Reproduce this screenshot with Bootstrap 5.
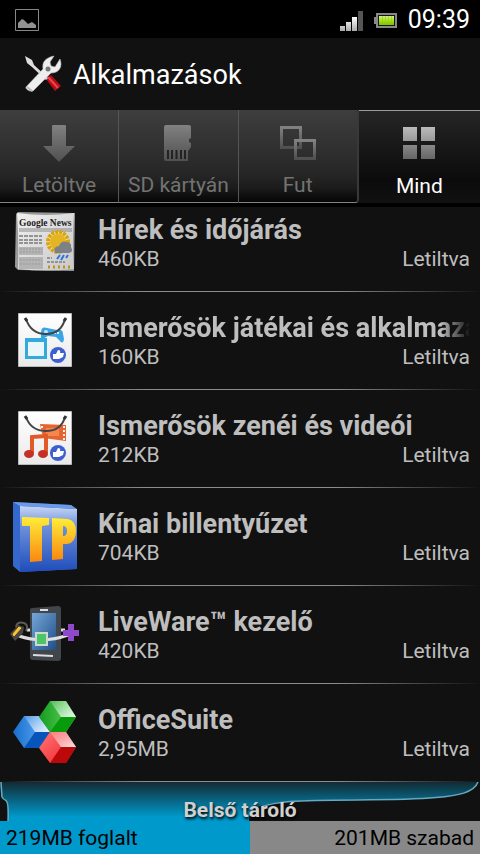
<!DOCTYPE html>
<html lang="hu">
<head>
<meta charset="utf-8">
<meta name="viewport" content="width=device-width, initial-scale=1">
<title>Alkalmazások</title>
<link href="https://cdn.jsdelivr.net/npm/bootstrap@5.3.0/dist/css/bootstrap.min.css" rel="stylesheet">
<style>
  body { background: #111; color: #bebebe; font-family: Roboto, "Noto Sans", sans-serif; font-size: 21px; line-height: 26px; }
  svg { display: block; flex: none; }
  .status-bar { background: #000; height: 38px; color: #fff; font-size: 25px; padding: 2px 10px 0 15px; gap: 10px; }
  .title-bar { height: 72px; }
  .title-bar h1 { font-size: 27px; line-height: 32px; padding: 2px 0 0 1px; }
  .app-tabs { z-index: 2; background: #111; border-bottom: 4px solid #000; }
  .app-tabs button { flex: 1 1 0; height: 93px; color: #737373; border: 0; border-bottom: 1px solid #858585; padding: 8px 0 0; background: linear-gradient(#3e3e3e, #262626 70%, #1b1b1b 85%, #050505); white-space: nowrap; line-height: 26px; }
  .app-tabs button + button { border-left: 1px solid #555; }
  .app-tabs .before-active { border-right: 2px solid #383838; border-radius: 0 0 4px 0; }
  .app-tabs button.current { flex-basis: 3px; color: #fff; border: 0; border-top: 1px solid #9a9a9a; background: linear-gradient(#252525, #0b0b0b 75%, #111); }
  .app-tabs svg { margin: 0 auto 10px; }
  .app-list { margin-top: -13px; }
  .app-list li { padding: 20px 10px 19px 10px; border-bottom: 1px solid; border-image: linear-gradient(90deg, #111, #8c8c8c 30%, #8c8c8c 70%, #111) 1; }
  .app-icon { width: 70px; height: 76px; margin: -10px 18px -10px 0; }
  .app-name { font-size: 27px; line-height: 32px; white-space: nowrap; overflow: hidden; }
  .fade-end { -webkit-mask-image: linear-gradient(90deg, #000 92%, transparent); mask-image: linear-gradient(90deg, #000 92%, transparent); }
  .storage { height: 39px; }
  .storage-curve { width: 100%; height: 39px; }
  .storage-label { color: #d0d0d0; font-size: 21px; top: 15px; text-shadow: 1px 2px 3px #000; }
  .usage { height: 33px; background: #888; color: #000; border-radius: 0; font-size: 21px; }
  .usage-fill { background: #09c; color: #000; padding-left: 6px; }
  .usage-free { padding-right: 6px; }
</style>
<script src="https://cdn.jsdelivr.net/npm/bootstrap@5.3.0/dist/js/bootstrap.bundle.min.js"></script>
</head>
<body>
<div class="status-bar d-flex align-items-center">
  <svg width="24" height="22" viewBox="0 0 24 22" class="me-auto"><path d="M.5.5h23v21H.5z" fill="none" stroke="#888"/><path d="M3 19v-5l4-4 2 1 4 4 4-2 4 3v3z" fill="#929292"/></svg>
  <svg width="24" height="21" viewBox="0 0 24 21"><defs><linearGradient id="sg" x2="0" y2="1"><stop stop-color="#fff"/><stop offset="1" stop-color="#aaa"/></linearGradient></defs><path d="M0 16h5v5H0zM6 12h5v9H6zM12 7h5v14h-5z" fill="url(#sg)"/><path d="M18 1h5v20h-5z" fill="#555"/></svg>
  <svg width="24" height="17" viewBox="0 0 24 17"><defs><linearGradient id="bg" x2="0" y2="1"><stop stop-color="#d7f08c"/><stop offset=".6" stop-color="#9bdc0c"/><stop offset="1" stop-color="#7ebd00"/></linearGradient></defs><path d="M0 5h2V1h21v15H2v-4H0z" fill="#888"/><path d="M4 3h17v11H4z" fill="#151515"/><path d="M5 4h15v9H5z" fill="url(#bg)"/><path d="M8.500 4v9M11.500 4v9M14.500 4v9M17.500 4v9" stroke="#8ccc10" stroke-width=".6"/></svg>
  <span>09:39</span>
</div>
<header class="title-bar d-flex align-items-center ps-4">
  <svg width="40" height="38" viewBox="0 0 40 38"><path d="M22 24l5-4 10 11-6 5z" fill="#b70d17"/><path d="M24 22l10 11" stroke="#ef4350" stroke-width="2"/><path d="M1 1l7 4 2 5 14 13-2 2L8 12 3 8z" fill="#ddd"/><path d="M2 32l17-18c-1-7 2-11 11-13l-4 6 1 4 4 1 5-8c3 8-1 14-9 14L9 36c-3 1-8-2-7-4z" fill="#eee" stroke="#bbb" stroke-width=".6"/><circle cx="24" cy="14" r="2.500" fill="#777"/><path d="M3 32l5 4" stroke="#bbb" stroke-width="2"/></svg>
  <h1 class="mb-0 ms-2 fw-normal text-white">Alkalmazások</h1>
</header>
<nav class="app-tabs d-flex position-relative" role="tablist">
  <button type="button" role="tab" aria-selected="false"><svg width="34" height="40" viewBox="0 0 34 40"><defs><linearGradient id="tg" x2="0" y2="1"><stop stop-color="#818181"/><stop offset="1" stop-color="#505050"/></linearGradient></defs><path d="M10 4q0-1 1-1h12q1 0 1 1v20h9L17 40 1 24h9z" fill="url(#tg)"/></svg>Letöltve</button>
  <button type="button" role="tab" aria-selected="false"><svg width="30" height="40" viewBox="0 0 30 40"><path d="M3 3h23q2 0 2 2v11l-2 1v3l2 1v4l-3 4v10H3q-2 0-2-2V5q0-2 2-2z" fill="url(#tg)"/><path d="M5 28v9M9 28v9M13.500 28v9M18 28v9M22 28v9" stroke="#222" stroke-width="2"/></svg>SD kártyán</button>
  <button type="button" role="tab" aria-selected="false" class="before-active"><svg width="38" height="40" viewBox="0 0 38 40"><g fill="none" stroke="url(#tg)" stroke-width="3"><path d="M2.500 5.500h19v20h-19z"/><path d="M16.500 18.500h19v18h-19z"/></g></svg>Fut</button>
  <button type="button" role="tab" aria-selected="true" class="current"><svg width="34" height="40" viewBox="0 0 34 40"><defs><linearGradient id="mg" x2="0" y2="1"><stop stop-color="#bbb"/><stop offset="1" stop-color="#999"/></linearGradient><linearGradient id="mh" x2="0" y2="1"><stop stop-color="#888"/><stop offset="1" stop-color="#666"/></linearGradient></defs><path d="M1 4h14v14H1zM19 4h14v14H19z" fill="url(#mg)"/><path d="M1 22h14v14H1zM19 22h14v14H19z" fill="url(#mh)"/></svg>Mind</button>
</nav>
<ul class="app-list list-unstyled mb-0">
  <li class="d-flex align-items-start">
    <svg class="app-icon" viewBox="0 0 70 76"><defs><linearGradient id="ng" x2="1" y2="1"><stop stop-color="#f0f0f0"/><stop offset="1" stop-color="#c8c8c8"/></linearGradient></defs><path d="M8 8l57 1-1 58-56-1-3-3 1-53z" fill="#999"/><path d="M7 9q29 4 57 0 -2 29 0 56-28 3-56 0 1-28-1-56z" fill="url(#ng)"/><text x="9" y="22" font-family="Liberation Serif, serif" font-weight="700" font-size="9.500" fill="#222">Google News</text><path d="M9 25h53M9 27h53" stroke="#888"/><path d="M9 32h23M9 36h23M9 39h23" stroke="#444" stroke-dasharray="4 1"/><path d="M9 43h24v8H9zM9 53h24v12H9z" fill="#b4b4b4"/><path d="M10 45h22M10 48h22M10 56h22M10 60h22" stroke="#999" stroke-dasharray="2 1"/><circle cx="48" cy="38" r="10" fill="#f6e39d" stroke="#d9a40e" stroke-width="4" stroke-dasharray="3 1"/><circle cx="48" cy="38" r="8" fill="#e5b423"/><path d="M45 49q-3-6 4-7 2-6 8-4 5 1 4 5 3 5-2 6z" fill="#7c8187"/><path d="M50 51l-3 4M54 51l-3 5M58 51l-2 3" stroke="#2d70df" stroke-width="2"/><path d="M37 54h5M37 58h18" stroke="#555" stroke-dasharray="3 1"/><path d="M38 63h22" stroke="#b99324" stroke-width="3" stroke-dasharray="2 3"/></svg>
    <div class="flex-grow-1 overflow-hidden"><div class="app-name fw-bold">Hírek és időjárás</div><div class="d-flex justify-content-between"><span>460KB</span><span>Letiltva</span></div></div>
  </li>
  <li class="d-flex align-items-start">
    <svg class="app-icon" viewBox="0 0 70 76"><defs><linearGradient id="wg" x2="0" y2="1"><stop stop-color="#fff"/><stop offset="1" stop-color="#eaeaea"/></linearGradient></defs><path d="M8.500 11.500h53v53h-53z" fill="url(#wg)" stroke="#bbb"/><path d="M31 31q0-7 6-5l10 2q6-1 6 4l1 5q-1 6-4 2l-4-4-8-1-7 4z" fill="#38a5e7"/><circle cx="36" cy="30" r="2" fill="#bfeaff"/><path d="M44 31h5" stroke="#d4f1ff" stroke-width="2" stroke-dasharray="2 1"/><path d="M16.500 37.500h19v18h-19z" fill="#e9f7fd" stroke="#33aade" stroke-width="3"/><path d="M15 36h22v4H15z" fill="#33aade"/><path d="M16 17q5 15 20 15T55 17" fill="none" stroke="#444" stroke-width="2"/><path d="M15 16l2 3M56 16l-2 3" stroke="#333" stroke-width="3"/><circle cx="48" cy="53" r="8" fill="#3e60cf"/><path d="M43 52h3l2-4q3 0 2 3h4l-1 4-4 2h-6z" fill="#fff"/><path d="M49 61q5-1 7-7-1 6-7 7z" fill="#eee"/></svg>
    <div class="flex-grow-1 overflow-hidden"><div class="app-name fw-bold fade-end">Ismerősök játékai és alkalmazásai</div><div class="d-flex justify-content-between"><span>160KB</span><span>Letiltva</span></div></div>
  </li>
  <li class="d-flex align-items-start">
    <svg class="app-icon" viewBox="0 0 70 76"><path d="M8.500 11.500h53v53h-53z" fill="url(#wg)" stroke="#bbb"/><path d="M30 24l26 1v16l-23-3z" fill="#e66332"/><path d="M32 26v11M54 26v14" stroke="#fff2e8" stroke-width="2" stroke-dasharray="2 2"/><path d="M36 28h13v8H36z" fill="#f4874c"/><path d="M22 53V37l14-1v17" fill="none" stroke="#e35a29" stroke-width="4"/><ellipse cx="19" cy="54" rx="5" ry="4" fill="#c33028"/><ellipse cx="33" cy="54" rx="5" ry="4" fill="#c33028"/><path d="M16 17q5 14 20 14T55 17" fill="none" stroke="#444" stroke-width="2"/><path d="M15 16l2 3M56 16l-2 3" stroke="#333" stroke-width="3"/><circle cx="48" cy="53" r="8" fill="#3e60cf"/><path d="M43 52h3l2-4q3 0 2 3h4l-1 4-4 2h-6z" fill="#fff"/><path d="M49 61q5-1 7-7-1 6-7 7z" fill="#eee"/></svg>
    <div class="flex-grow-1 overflow-hidden"><div class="app-name fw-bold">Ismerősök zenéi és videói</div><div class="d-flex justify-content-between"><span>212KB</span><span>Letiltva</span></div></div>
  </li>
  <li class="d-flex align-items-start">
    <svg class="app-icon" viewBox="0 0 70 76"><defs><linearGradient id="pg" x2="0" y2="1"><stop stop-color="#c8d7f5"/><stop offset=".3" stop-color="#6f91da"/><stop offset="1" stop-color="#1f4cba"/></linearGradient><linearGradient id="yg" x2="0" y2="1"><stop stop-color="#ffed38"/><stop offset="1" stop-color="#fa8810"/></linearGradient></defs><path d="M3 4l58 3 6 5v59l-57 3-7-6z" fill="#3568cc"/><path d="M10 8l57 3v60l-57 3z" fill="url(#pg)"/><path d="M3 4l58 3 6 4-57-3z" fill="#6a9ae8"/><g fill="url(#yg)"><path d="M12 19l27 1v7l-7 1v35l-12 1V28h-8z"/><path fill-rule="evenodd" d="M42 20l16 1q8 2 8 12 0 12-9 13h-4v15l-11 1zM53 28v10q4 0 4-5t-4-5z"/></g></svg>
    <div class="flex-grow-1 overflow-hidden"><div class="app-name fw-bold">Kínai billentyűzet</div><div class="d-flex justify-content-between"><span>704KB</span><span>Letiltva</span></div></div>
  </li>
  <li class="d-flex align-items-start">
    <svg class="app-icon" viewBox="0 0 70 76"><defs><linearGradient id="lg" x2="1" y2="1"><stop stop-color="#75a7d8"/><stop offset="1" stop-color="#204e86"/></linearGradient></defs><path d="M20 14q0-2 2-2l26-2q3 0 3 3v49q0 3-3 3l-25-1q-3 0-3-3z" fill="#41464d"/><path d="M22 17h24v37H22z" fill="url(#lg)"/><path d="M30 14h8M23 59l20 1" stroke="#ddd" stroke-width="2"/><path d="M9 40q24 8 49-1M17 34h3M51 34h4" fill="none" stroke="#dedede" stroke-width="3"/><path d="M25 36h13v14H25z" fill="#ccd9cc"/><path d="M27 38h9v10h-9z" fill="#4bc568"/><path d="M6 31q1-6 8-4 5 2 2 8" fill="none" stroke="#5d5b58" stroke-width="2"/><path d="M0 38l8-9 6 2-1 6-8 8z" fill="#494743"/><path d="M3 38l6-7 2 1-7 8z" fill="#ffc52a" stroke="#ffc52a"/><path d="M58 28h6v6h5v6h-5v5h-6v-5h-5v-6h5z" fill="#8d49ca"/></svg>
    <div class="flex-grow-1 overflow-hidden"><div class="app-name fw-bold">LiveWare™ kezelő</div><div class="d-flex justify-content-between"><span>420KB</span><span>Letiltva</span></div></div>
  </li>
  <li class="d-flex align-items-start">
    <svg class="app-icon" viewBox="0 -3 70 76"><defs><linearGradient id="b1"><stop stop-color="#176ecb"/><stop offset="1" stop-color="#69b4ff"/></linearGradient><linearGradient id="g1"><stop stop-color="#159b1c"/><stop offset="1" stop-color="#64d966"/></linearGradient><linearGradient id="r1" x2="1" y2="1"><stop stop-color="#ff7777"/><stop offset="1" stop-color="#ee2027"/></linearGradient><linearGradient id="w1" x2="1" y2="1"><stop stop-color="#fff" stop-opacity=".15"/><stop offset="1" stop-color="#fff" stop-opacity=".85"/></linearGradient></defs><path d="M3 35l11-16h15l11 16-11 16H14z" fill="url(#b1)"/><path d="M14 19h15l11 16H25z" fill="url(#w1)"/><path d="M25 35h15L29 51H14z" fill="#0754bb"/><path d="M29 20L40 4h16l10 16-10 15H40z" fill="url(#g1)"/><path d="M40 4h16l10 16H51z" fill="url(#w1)"/><path d="M51 20h15L56 35H40z" fill="#079b0b"/><path d="M29 51l11-16h16l10 15-10 16H40z" fill="url(#r1)"/><path d="M40 35h16l10 15H51z" fill="url(#w1)"/><path d="M51 50h15L56 66H40z" fill="#bd0809"/></svg>
    <div class="flex-grow-1 overflow-hidden"><div class="app-name fw-bold">OfficeSuite</div><div class="d-flex justify-content-between"><span>2,95MB</span><span>Letiltva</span></div></div>
  </li>
</ul>
<footer>
  <div class="storage position-relative">
    <svg class="storage-curve" viewBox="0 0 480 40" preserveAspectRatio="none"><defs><linearGradient id="fg" x2="0" y2="1"><stop stop-color="#122b33"/><stop offset=".9" stop-color="#0099cc"/></linearGradient></defs><path d="M0 0H478C474 11 458 14 436 16 394 20 330 17 290 20 264 22 249 24 249 40H8L7 20 1 16z" fill="url(#fg)"/><path d="M478 0C474 11 458 14 436 16 394 20 330 17 290 20 280 21 268 23 262 25M1 0l1 15q1 3 4 4 3 2 2 21" fill="none" stroke="#67a9c0" stroke-width="1.500"/></svg>
    <div class="storage-label position-absolute start-0 end-0 text-center fw-bold">Belső tároló</div>
  </div>
  <div class="usage progress justify-content-between">
    <div class="usage-fill progress-bar text-start justify-content-center" role="progressbar" aria-label="Belső tároló" aria-valuenow="52" aria-valuemin="0" aria-valuemax="100" style="width: 52%">219MB foglalt</div>
    <span class="usage-free align-self-center">201MB szabad</span>
  </div>
</footer>
</body>
</html>
